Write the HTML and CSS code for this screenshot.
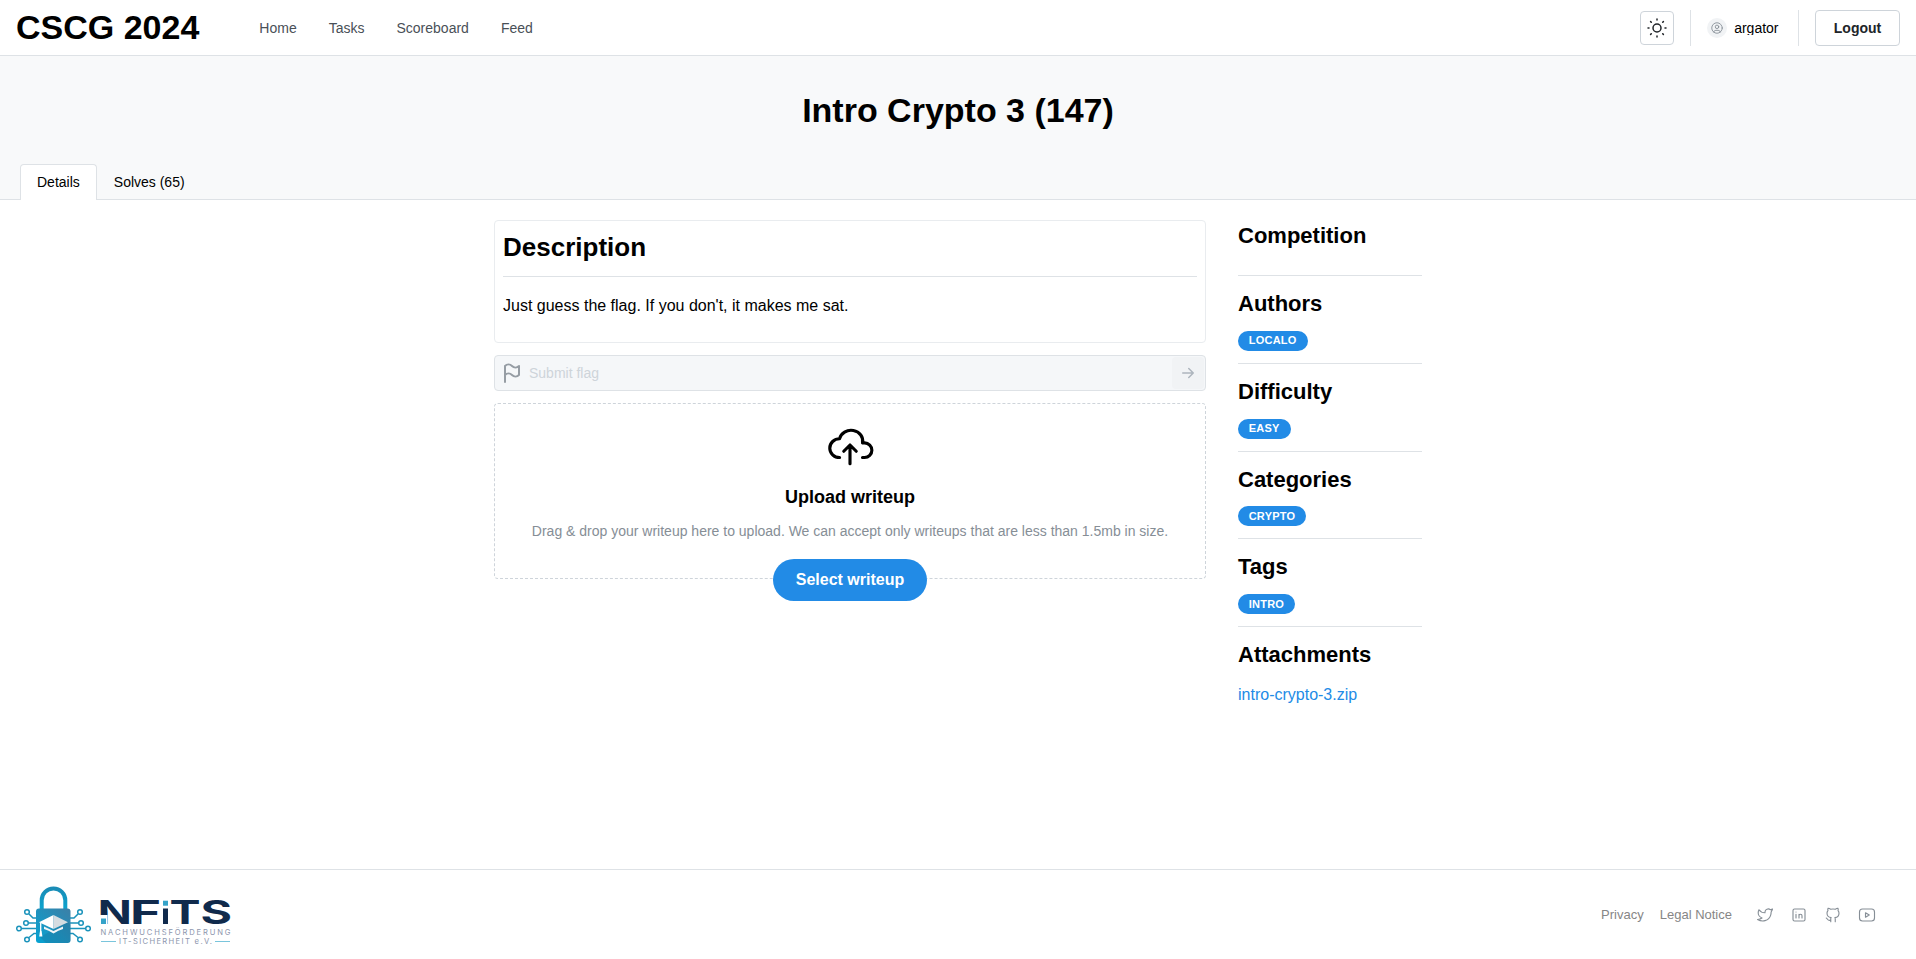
FILE: index.html
```html
<!DOCTYPE html>
<html lang="en">
<head>
<meta charset="utf-8">
<title>Intro Crypto 3 - CSCG 2024</title>
<link rel="stylesheet" href="styles.css">
</head>
<body>
<header class="header">
  <h1 class="brand">CSCG 2024</h1>
  <nav class="nav">
    <a>Home</a><a>Tasks</a><a>Scoreboard</a><a>Feed</a>
  </nav>
  <div class="account">
    <button class="theme" aria-label="Toggle theme">
      <svg class="icon" width="24" height="24" viewBox="0 0 24 24"><circle cx="12" cy="12" r="4"/><path d="M3 12h1m8-9v1m8 8h1m-9 8v1m-6.4-15.4l.7.7m12.1-.7l-.7.7m0 11.4l.7.7m-12.1-.7l-.7.7"/></svg>
    </button>
    <span class="rule"></span>
    <div class="user">
      <span class="avatar"><svg class="icon" width="14" height="14" viewBox="0 0 24 24"><circle cx="12" cy="12" r="9"/><circle cx="12" cy="10" r="3"/><path d="M6.168 18.849a4 4 0 0 1 3.832-2.849h4a4 4 0 0 1 3.834 2.855"/></svg></span>
      <span class="username">argator</span>
    </div>
    <span class="rule"></span>
    <button class="logout">Logout</button>
  </div>
</header>

<section class="hero">
  <h1 class="title">Intro Crypto 3 (147)</h1>
  <div class="tabs">
    <button class="tab active">Details</button>
    <button class="tab">Solves (65)</button>
  </div>
</section>

<main class="content">
  <div class="primary">
    <section class="card">
      <h2>Description</h2>
      <p>Just guess the flag. If you don't, it makes me sat.</p>
    </section>
    <div class="flag-input">
      <svg class="icon flag" width="24" height="24" viewBox="0 0 24 24"><path d="M5 5v16M19 5v9M5 5a5 5 0 0 1 7 0a5 5 0 0 0 7 0M5 14a5 5 0 0 1 7 0a5 5 0 0 0 7 0"/></svg>
      <span class="placeholder">Submit flag</span>
      <span class="send"><svg class="icon" width="18" height="18" viewBox="0 0 24 24"><path d="M5 12h14M13 18l6-6M13 6l6 6"/></svg></span>
    </div>
    <section class="dropzone">
      <svg class="icon cloud" width="50" height="50" viewBox="0 0 24 24"><path d="M7 18a4.6 4.4 0 0 1 0-9a5 4.5 0 0 1 11 2h1a3.5 3.5 0 0 1 0 7h-1M9 15l3-3l3 3M12 12v9"/></svg>
      <h3>Upload writeup</h3>
      <p>Drag &amp; drop your writeup here to upload. We can accept only writeups that are less than 1.5mb in size.</p>
      <button class="select">Select writeup</button>
    </section>
  </div>
  <aside class="sidebar">
    <section><h3>Competition</h3><div></div></section>
    <section><h3>Authors</h3><span class="badge">LOCALO</span></section>
    <section><h3>Difficulty</h3><span class="badge">EASY</span></section>
    <section><h3>Categories</h3><span class="badge">CRYPTO</span></section>
    <section><h3>Tags</h3><span class="badge">INTRO</span></section>
    <section><h3>Attachments</h3><a class="file">intro-crypto-3.zip</a></section>
  </aside>
</main>

<footer class="footer">
  <svg class="logo" width="216" height="62" viewBox="0 0 216 62">
    <defs>
      <linearGradient id="body" x1="0" y1="1" x2="1" y2="0"><stop offset="0" stop-color="#05a3d3"/><stop offset="1" stop-color="#3d7fa6"/></linearGradient>
      <linearGradient id="shackle" x1="0" y1="0" x2="0" y2="1"><stop offset="0" stop-color="#1a8cb6"/><stop offset="1" stop-color="#0ba4cf"/></linearGradient>
    </defs>
    <path d="M25.700 25V16.300a11.800 11.800 0 0 1 23.600 0v8.700" fill="none" stroke="url(#shackle)" stroke-width="4"/>
    <g fill="none" stroke="#1b93bb" stroke-width="1.500" transform="translate(0 2)">
      <path d="M13 28l4 4h4M12.500 37h8M6 42.500h15M13 51.500l5-4h3M62 28l-4 4h-4M62 37h-8M69 42.500h-15M62 51.500l-5-4h-3"/>
      <circle cx="11" cy="26" r="2.300"/><circle cx="10" cy="37" r="2.300"/><circle cx="3" cy="42.500" r="2.300"/><circle cx="11" cy="53.500" r="2.300"/>
      <circle cx="64" cy="26" r="2.300"/><circle cx="65" cy="37" r="2.300"/><circle cx="72" cy="42.500" r="2.300"/><circle cx="64" cy="53.500" r="2.300"/>
    </g>
    <rect x="20" y="24.500" width="34.500" height="34.500" rx="3" fill="url(#body)"/>
    <path d="M24 53l28-15 2.500 2.500V56a3 3 0 0 1-3 3H30z" fill="#1b6d95" opacity=".3"/>
    <path d="M28 42.500v2.500q4.500 1 9.500 4.500q5-3.500 9.500-4.500v-2.500l-9.500 4.500z" fill="#f1f4f6"/>
    <path d="M23 38.300l14.500-7.300v14z" fill="#fff"/><path d="M52 38.300l-14.500-7.300v14z" fill="#d5dce1"/>
    <path d="M24.700 39v8" stroke="#fff" stroke-width="1.300"/><path d="M24 47h1.600l.8 5.500h-3.200z" fill="#fff"/>
    <g class="wordmark">
      <text x="81.800" y="40" textLength="34" lengthAdjust="spacingAndGlyphs">N</text>
      <text x="114" y="40" textLength="31" lengthAdjust="spacingAndGlyphs">F</text>
      <text x="153.500" y="40" textLength="31" lengthAdjust="spacingAndGlyphs">T</text>
      <text x="184.500" y="40" textLength="31.500" lengthAdjust="spacingAndGlyphs">S</text>
    </g>
    <rect x="147" y="24.500" width="5" height="15.500" fill="#102a4c"/>
    <rect x="147" y="16.700" width="5" height="5" fill="#35a3c9"/>
    <rect x="83" y="31" width="8.500" height="10" fill="#fff"/>
    <rect x="85" y="34.500" width="5" height="5.500" fill="#35a3c9"/>
    <g class="tagline">
      <text x="84.500" y="50.500" textLength="130">NACHWUCHSFÖRDERUNG</text>
      <text x="103" y="60.300" textLength="93">IT-SICHERHEIT e.V.</text>
    </g>
    <path d="M85 57.500h15M199 57.500h15" stroke="#7ac5dc" stroke-width="1"/>
  </svg>
  <div class="links">
    <a>Privacy</a><a>Legal Notice</a>
    <div class="social">
      <svg class="icon" width="18" height="18" viewBox="0 0 24 24"><path d="M22 4.010c-1 .49-1.980.689-3 .99c-1.121-1.265-2.783-1.335-4.380-.737s-2.643 2.060-2.620 3.737v1c-3.245.083-6.135-1.395-8-4c0 0-4.182 7.433 4 11c-1.872 1.247-3.739 2.088-6 2c3.308 1.803 6.913 2.423 10.034 1.517c3.580-1.040 6.522-3.723 7.651-7.742a13.840 13.840 0 0 0 .497-3.753c0-.249 1.510-2.772 1.818-4.013z"/></svg>
      <svg class="icon" width="18" height="18" viewBox="0 0 24 24"><rect x="4" y="4" width="16" height="16" rx="2"/><path d="M8 11v5M8 8v.010M12 16v-5M16 16v-3a2 2 0 0 0-4 0"/></svg>
      <svg class="icon" width="18" height="18" viewBox="0 0 24 24"><path d="M9 19c-4.300 1.400-4.300-2.500-6-3m12 5v-3.500c0-1 .1-1.400-.5-2c2.800-.3 5.500-1.400 5.500-6a4.600 4.600 0 0 0-1.300-3.200a4.200 4.200 0 0 0-.1-3.200s-1.100-.3-3.500 1.300a12.300 12.300 0 0 0-6.200 0c-2.400-1.600-3.500-1.300-3.500-1.300a4.200 4.200 0 0 0-.1 3.200a4.600 4.600 0 0 0-1.300 3.200c0 4.600 2.700 5.700 5.500 6c-.6.6-.6 1.200-.5 2v3.500"/></svg>
      <svg class="icon" width="18" height="18" viewBox="0 0 24 24"><rect x="2" y="4" width="20" height="16" rx="4"/><path d="M10 9l5 3l-5 3z"/></svg>
    </div>
  </div>
</footer>
</body>
</html>
```
FILE: styles.css
```css
* { box-sizing: border-box; }
body {
  margin: 0;
  min-height: 959px;
  display: flex;
  flex-direction: column;
  background: #fff;
  color: #000;
  font: 16px/1.55 "Liberation Sans", Arial, sans-serif;
}
h1, h2, h3, p { margin: 0; }
button { font-family: inherit; color: inherit; background: none; padding: 0; }
.icon {
  display: block;
  flex: none;
  fill: none;
  stroke: currentColor;
  stroke-width: 1.5;
  stroke-linecap: round;
  stroke-linejoin: round;
}

.header {
  height: 56px;
  padding: 0 16px;
  display: flex;
  align-items: center;
  border-bottom: 1px solid #dee2e6;
}
.brand { font-size: 34px; line-height: 1.3; }
.nav {
  display: flex;
  gap: 32px;
  margin-left: 60px;
  padding-top: 2px;
  font-size: 14px;
  color: #495057;
}
.account { display: flex; align-items: center; gap: 16px; margin-left: auto; }
.theme {
  width: 34px;
  height: 34px;
  display: grid;
  place-items: center;
  border: 1px solid #ced4da;
  border-radius: 4px;
  color: #212529;
}
.rule { width: 1px; height: 36px; background: #dee2e6; }
.user { display: flex; align-items: center; gap: 7.500px; }
.avatar {
  width: 20px;
  height: 20px;
  display: grid;
  place-items: center;
  border-radius: 50%;
  background: #f1f3f5;
  color: #868e96;
}
.username { overflow: hidden; font-size: 14px; line-height: 1; margin-right: 3.500px; }
.logout {
  width: 85px;
  height: 36px;
  border: 1px solid #ced4da;
  border-radius: 4px;
  color: #212529;
  font-size: 14px;
  font-weight: 700;
}

.hero {
  height: 144px;
  padding-top: 32px;
  display: flex;
  flex-direction: column;
  justify-content: space-between;
  background: #f8f9fa;
}
.title { text-align: center; font-size: 34px; line-height: 1.3; }
.tabs {
  display: flex;
  padding-left: 20px;
  box-shadow: inset 0 -1px #dee2e6;
}
.tab {
  height: 36px;
  padding: 0 16px 1px;
  border: 1px solid transparent;
  border-bottom: 0;
  border-radius: 4px 4px 0 0;
  font-size: 14px;
}
.tab.active { background: #fff; border-color: #dee2e6; }

.content {
  width: 960px;
  margin: 0 auto;
  padding: 20px 16px;
  flex: 1;
  display: grid;
  grid-template-columns: 712px 184px;
  column-gap: 32px;
  align-items: start;
}
.primary { display: grid; gap: 12px; }
.card {
  padding: 8px;
  border: 1px solid #e9ecef;
  border-radius: 4px;
}
.card h2 {
  padding: 1px 0 11px;
  border-bottom: 1px solid #dee2e6;
  font-size: 26px;
  line-height: 1.35;
}
.card p { padding-top: 1px; margin: 16px 0 15px; }
.flag-input {
  height: 36px;
  padding: 0 1px 0 5px;
  display: flex;
  align-items: center;
  border: 1px solid #dee2e6;
  border-radius: 4px;
  background: #f5f7f9;
  font-size: 14px;
}
.flag { color: #969da4; stroke-width: 2; }
.placeholder { margin-left: 5px; padding-top: 1px; color: #ced4da; }
.send {
  width: 32px;
  height: 32px;
  margin-left: auto;
  display: grid;
  place-items: center;
  border-radius: 4px;
  background: #f1f3f5;
  color: #adb5bd;
}
.send .icon { stroke-width: 2; }
.dropzone {
  height: 176px;
  padding-top: 16px;
  display: flex;
  flex-direction: column;
  align-items: center;
  border: 1px dashed #ced4da;
  border-radius: 4px;
}
.dropzone h3 { margin-top: 13px; font-size: 18px; line-height: 28px; }
.dropzone p { margin-top: 10px; font-size: 14px; color: #868e96; }
.select {
  width: 154px;
  height: 42px;
  flex: none;
  margin-top: 16px;
  border: 0;
  border-radius: 32px;
  background: #228be6;
  color: #fff;
  font-size: 16px;
  font-weight: 700;
}

.sidebar { padding-top: .2px; }
.sidebar section {
  display: flex;
  flex-direction: column;
  align-items: flex-start;
  gap: 12px;
}
.sidebar section:not(:last-child) {
  padding-bottom: 12px;
  margin-bottom: 12px;
  border-bottom: 1px solid #dee2e6;
}
.sidebar h3 { height: 30.800px; padding-top: 1px; font-size: 22px; line-height: 1.4; }
.badge {
  height: 20px;
  padding: .65px 11px 0 10.670px;
  border-radius: 32px;
  background: #228be6;
  color: #fff;
  font-size: 11px;
  font-weight: 700;
  line-height: 18px;
  letter-spacing: .25px;
}
.file { padding-top: 1px; color: #228be6; }

.footer {
  height: 90px;
  padding: 0 32px 0 16px;
  display: flex;
  align-items: center;
  justify-content: space-between;
  border-top: 1px solid #dee2e6;
}
.links { display: flex; align-items: center; gap: 16px; padding-top: 1px; font-size: 13px; color: #868686; }
.social { display: flex; gap: 16px; padding: 0 8px; color: #868e96; }
.wordmark { font: 700 32px Inter, sans-serif; fill: #102a4c; }
.tagline { font: 400 7.600px Inter, sans-serif; fill: #8d96ad; }
```
